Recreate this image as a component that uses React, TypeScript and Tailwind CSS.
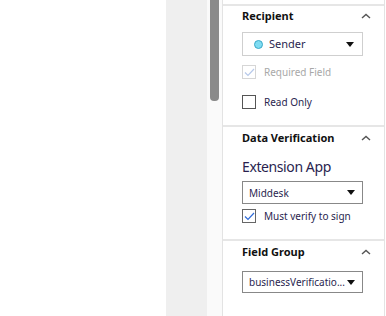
import React from 'react';

const font = { fontFamily: '"Noto Sans", "Liberation Sans", sans-serif' };

const Chevron = () => (
  <svg width="10" height="6" viewBox="0 0 10 6" className="text-[#555]">
    <path d="M1 5 L5 1.5 L9 5" fill="none" stroke="currentColor" strokeWidth="1.4" />
  </svg>
);

const Caret = () => (
  <svg width="8" height="5" viewBox="0 0 8 5">
    <path d="M0 0 H8 L4 5 Z" fill="#111" />
  </svg>
);

const Check = ({ color }: { color: string }) => (
  <svg width="11" height="9" viewBox="0 0 11 9">
    <path d="M1 4.5 L4 7.5 L10 1" fill="none" stroke={color} strokeWidth="1.2" />
  </svg>
);

const Header = ({ title }: { title: string }) => (
  <div className="flex h-[16px] items-center justify-between pr-[13px]">
    <span className="text-[11px] leading-[16px] font-bold text-[#111]">{title}</span>
    <Chevron />
  </div>
);

export default function App() {
  return (
    <div className="flex h-[316px] w-[386px] bg-white overflow-hidden text-[#1e1246]" style={font}>
      <div className="w-[166px] bg-white" />
      <div className="w-[41px] bg-[#efefef]" />
      <div className="w-[15px] bg-[#fafafa] pl-[3px]">
        <div className="h-[101px] w-[9px] rounded-b-[4px] bg-[#8a8a8a]" />
      </div>
      <div className="w-[163px] border-l border-r border-[#e3e3e3] bg-white pt-[4px]">
        {/* Recipient */}
        <div className="h-[121px] border-t-2 border-[#e6e6e6] pl-[19px] pt-[2px]">
          <Header title="Recipient" />
          <div className="mt-[8px] flex h-[24px] w-[121px] items-center border border-[#cfcfcf] pl-[11px] pr-[8px]">
            <span className="h-[9px] w-[9px] rounded-full border border-[#3aa9c8] bg-[#7fdcf2]" />
            <span className="ml-[6px] flex-1 text-[11px] leading-[14px] text-[#2a1f4f]">Sender</span>
            <Caret />
          </div>
          <div className="mt-[9px] flex h-[14px] items-center">
            <span className="flex h-[14px] w-[14px] items-center justify-center border border-[#d6d6d6]">
              <Check color="#b7c9ea" />
            </span>
            <span className="ml-[8px] text-[10px] leading-[14px] text-[#a8a8a8]">Required Field</span>
          </div>
          <div className="mt-[16px] flex h-[14px] items-center">
            <span className="h-[14px] w-[14px] border border-[#555]" />
            <span className="ml-[8px] text-[10px] leading-[14px] text-[#2a1f4f]">Read Only</span>
          </div>
        </div>
        {/* Data Verification */}
        <div className="h-[114px] border-t-2 border-[#e6e6e6] pl-[19px] pt-[3px]">
          <Header title="Data Verification" />
          <div className="mt-[12px] text-[14px] leading-[18px] tracking-[-0.4px] text-[#2a1f4f]">Extension App</div>
          <div className="mt-[5px] flex h-[23px] w-[121px] items-center border border-[#888] pl-[6px] pr-[7px]">
            <span className="flex-1 text-[10px] leading-[14px] text-[#2a1f4f]">Middesk</span>
            <Caret />
          </div>
          <div className="mt-[5px] flex h-[14px] items-center">
            <span className="flex h-[14px] w-[14px] items-center justify-center border border-[#666]">
              <Check color="#2f6bd8" />
            </span>
            <span className="ml-[8px] text-[10px] leading-[14px] text-[#2a1f4f]">Must verify to sign</span>
          </div>
        </div>
        {/* Field Group */}
        <div className="border-t-2 border-[#e6e6e6] pl-[19px] pt-[3px]">
          <Header title="Field Group" />
          <div className="mt-[11px] flex h-[22px] w-[121px] items-center border border-[#888] pl-[6px] pr-[7px]">
            <span className="flex-1 truncate text-[10px] leading-[14px] text-[#2a1f4f]">businessVerificatio...</span>
            <Caret />
          </div>
        </div>
      </div>
    </div>
  );
}
